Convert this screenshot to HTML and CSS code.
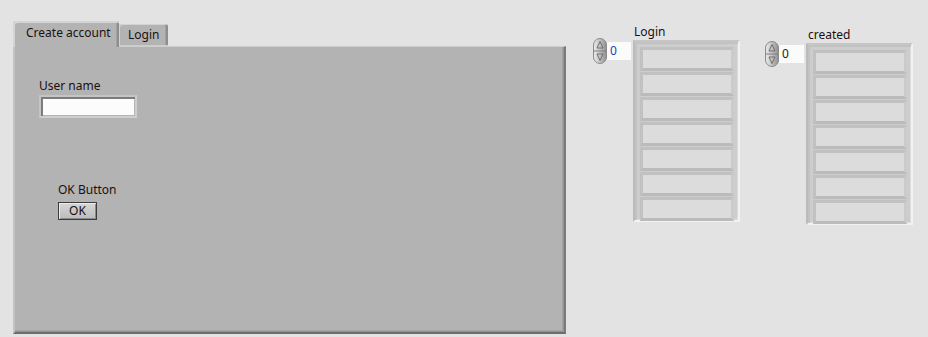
FILE: index.html
```html
<!DOCTYPE html>
<html lang="en">
<head>
    <meta charset="UTF-8">
    <title>Account panel</title>
    <link rel="stylesheet" href="styles.css">
</head>
<body>
    <div class="front">
        <div class="tabctl">
            <div class="tabs">
                <div class="tab active">Create account</div>
                <div class="tab">Login</div>
                <div class="tab-rest"></div>
            </div>
            <div class="tab-panel">
                <label class="ctl-label">User name</label>
                <div class="textbox"></div>

                <div class="btn-group">
                    <label class="ctl-label">OK Button</label>
                    <button class="btn">OK</button>
                </div>
            </div>
        </div>

        <div class="arr arr-login">
            <div class="arr-label">Login</div>
            <div class="arr-index">
                <svg class="spin" width="14" height="26" viewBox="0 0 14 26">
                    <defs>
                        <linearGradient id="sg1" x1="0" y1="0" x2="1" y2="0">
                            <stop offset="0" stop-color="#ececec"/>
                            <stop offset="0.45" stop-color="#c6c6c6"/>
                            <stop offset="1" stop-color="#8e8e8e"/>
                        </linearGradient>
                    </defs>
                    <rect x="0.5" y="0.5" width="13" height="25" rx="6.5" fill="url(#sg1)" stroke="#8a8a8a"/>
                    <line x1="1" y1="13" x2="13" y2="13" stroke="#808080"/>
                    <path d="M7 3.5 L10 10 L4 10 Z" fill="none" stroke="#6e6e6e"/>
                    <path d="M7 22.5 L10 16 L4 16 Z" fill="none" stroke="#6e6e6e"/>
                </svg>
                <div class="idx idx-blue">0</div>
            </div>
            <div class="arr-frame">
                <div class="cell"></div>
                <div class="cell"></div>
                <div class="cell"></div>
                <div class="cell"></div>
                <div class="cell"></div>
                <div class="cell"></div>
                <div class="cell"></div>
            </div>
        </div>

        <div class="arr arr-created">
            <div class="arr-label">created</div>
            <div class="arr-index">
                <svg class="spin" width="14" height="26" viewBox="0 0 14 26">
                    <defs>
                        <linearGradient id="sg2" x1="0" y1="0" x2="1" y2="0">
                            <stop offset="0" stop-color="#ececec"/>
                            <stop offset="0.45" stop-color="#c6c6c6"/>
                            <stop offset="1" stop-color="#8e8e8e"/>
                        </linearGradient>
                    </defs>
                    <rect x="0.5" y="0.5" width="13" height="25" rx="6.5" fill="url(#sg2)" stroke="#8a8a8a"/>
                    <line x1="1" y1="13" x2="13" y2="13" stroke="#808080"/>
                    <path d="M7 3.5 L10 10 L4 10 Z" fill="none" stroke="#6e6e6e"/>
                    <path d="M7 22.5 L10 16 L4 16 Z" fill="none" stroke="#6e6e6e"/>
                </svg>
                <div class="idx">0</div>
            </div>
            <div class="arr-frame">
                <div class="cell"></div>
                <div class="cell"></div>
                <div class="cell"></div>
                <div class="cell"></div>
                <div class="cell"></div>
                <div class="cell"></div>
                <div class="cell"></div>
            </div>
        </div>
    </div>
</body>
</html>
```

FILE: styles.css
```css
/* Global */
body {
    margin: 0;
    background-color: #e3e3e3;
    font-family: 'Noto Sans', 'Open Sans', sans-serif;
    font-size: 12px;
    color: #1c1010;
    width: 928px;
    height: 337px;
    overflow: hidden;
}

.front {
    display: flex;
    align-items: flex-start;
    padding: 21px 0 0 13px;
}

/* Tab control */
.tabctl {
    width: 553px;
}

.tabs {
    display: flex;
    align-items: flex-end;
    height: 25px;
}

.tab {
    box-sizing: border-box;
    height: 22px;
    width: 49px;
    padding: 3px 0 0 9px;
    line-height: 16px;
    background-color: #b3b3b3;
    border-radius: 3px 3px 0 0;
    box-shadow: inset 1px 1px 0 #d2d2d2, inset -2px 0 0 #8e8e8e, inset -3px 0 0 #a2a2a2;
    border-bottom: 1px solid #cdcdcd;
}

.tab.active {
    position: relative;
    z-index: 1;
    height: 26px;
    width: 106px;
    margin-bottom: -1px;
    padding: 4px 0 0 13px;
    border-bottom: none;
    box-shadow: inset 2px 2px 0 #d4d4d4, inset -2px 0 0 #8e8e8e, inset -3px 0 0 #a2a2a2;
}

.tab-rest {
    flex: 1;
    height: 1px;
}

.tab-panel {
    box-sizing: border-box;
    height: 288px;
    padding: 31px 0 0 24px;
    background-color: #b3b3b3;
    border-top: 1px solid #cdcdcd;
    border-left: 2px solid #c3c3c3;
    border-right: 2px solid #7a7a7a;
    border-bottom: 2px solid #6c6c6c;
    box-shadow: inset -1px -1px 0 #939393, inset -2px -2px 0 #a4a4a4;
}

.ctl-label {
    display: block;
    line-height: 16px;
}

.textbox {
    box-sizing: border-box;
    width: 98px;
    height: 23px;
    margin-top: 1px;
    background-color: #fcfcfc;
    border: 2px solid;
    border-color: #c4c4c4 #cecece #cecece #c4c4c4;
    box-shadow: inset 2px 2px 0 #7c7c7c, inset -1px -1px 0 #b4b4b4;
}

.btn-group {
    margin: 64px 0 0 19px;
}

.btn {
    display: block;
    box-sizing: border-box;
    width: 39px;
    height: 18px;
    margin-top: 4px;
    padding: 0;
    font: inherit;
    line-height: 14px;
    color: #111;
    background: linear-gradient(#d6d6d6, #bcbcbc);
    border: 1px solid #3c3c3c;
    box-shadow: inset 1px 1px 0 #ececec, inset -1px -1px 0 #8a8a8a;
}

/* Arrays */
.arr {
    display: grid;
    grid-template-columns: 40px 107px;
}

.arr-login {
    margin: 3px 0 0 27px;
}

.arr-created {
    grid-template-columns: 41px 107px;
    margin: 6px 0 0 25px;
}

.arr-label {
    grid-column: 2;
    line-height: 16px;
    padding-left: 1px;
}

.arr-created .arr-label {
    padding-left: 2px;
}

.arr-index {
    grid-column: 1;
    display: flex;
    align-items: center;
    align-self: start;
    margin-top: -2px;
}

.spin {
    display: block;
    flex: none;
}

.idx {
    box-sizing: border-box;
    width: 25px;
    height: 18px;
    padding-left: 3px;
    line-height: 18px;
    background-color: #fbfbfb;
    color: #2a1800;
}

.idx-blue {
    width: 24px;
    color: #1148b8;
}

.arr-frame {
    grid-column: 2;
    box-sizing: border-box;
    height: 182px;
    padding: 5px 4px 0 5px;
    background-color: #cdcdcd;
    border: 2px solid;
    border-color: #c6c6c6 #f2f2f2 #f2f2f2 #bbbbbb;
    box-shadow: inset 2px 2px 0 #c2c2c2, inset -1px -1px 0 #dcdcdc;
}

.cell {
    box-sizing: border-box;
    height: 24px;
    margin-bottom: 1px;
    background-color: #dcdcdc;
    border: 3px solid;
    border-color: #c1c1c1 #cbcbcb #bbbbbb #c1c1c1;
}
```
